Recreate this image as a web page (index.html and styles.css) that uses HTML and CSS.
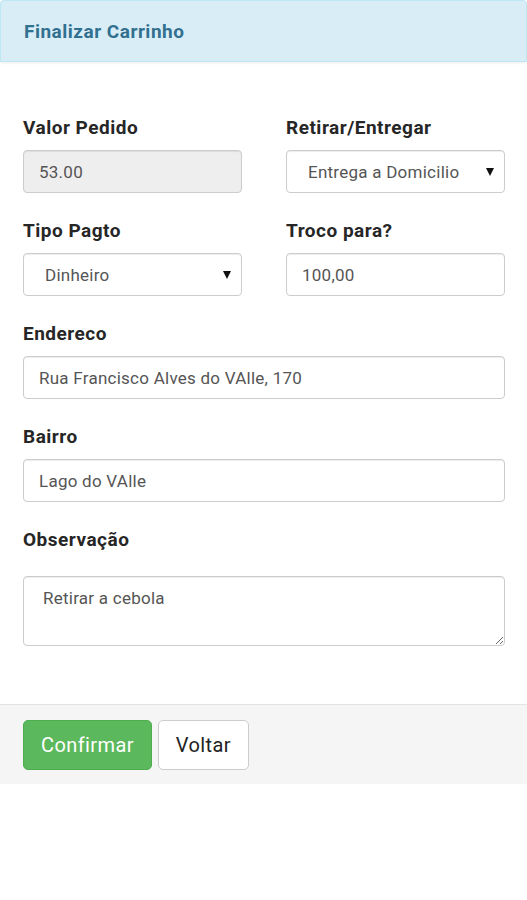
FILE: index.html
```html
<!DOCTYPE html>
<html lang="pt-BR">
<head>
  <meta charset="UTF-8">
  <title>Finalizar Carrinho</title>
  <link rel="stylesheet" href="styles.css">
</head>
<body>

  <div class="panel">
    <div class="panel-heading">
      <h3 class="panel-title">Finalizar Carrinho</h3>
    </div>

    <form class="panel-body">
      <div class="row">
        <div class="form-group">
          <label for="valor">Valor Pedido</label>
          <input id="valor" class="form-control" type="text" value="53.00" disabled>
        </div>
        <div class="form-group">
          <label for="entrega">Retirar/Entregar</label>
          <div class="select-wrap">
            <select id="entrega" class="form-control">
              <option>Entrega a Domicilio</option>
              <option>Retirar no Local</option>
            </select>
          </div>
        </div>
      </div>

      <div class="row">
        <div class="form-group">
          <label for="pagto">Tipo Pagto</label>
          <div class="select-wrap">
            <select id="pagto" class="form-control">
              <option>Dinheiro</option>
              <option>Cartao</option>
            </select>
          </div>
        </div>
        <div class="form-group">
          <label for="troco">Troco para?</label>
          <input id="troco" class="form-control" type="text" value="100,00">
        </div>
      </div>

      <div class="form-group">
        <label for="endereco">Endereco</label>
        <input id="endereco" class="form-control" type="text" value="Rua Francisco Alves do VAlle, 170">
      </div>

      <div class="form-group">
        <label for="bairro">Bairro</label>
        <input id="bairro" class="form-control" type="text" value="Lago do VAlle">
      </div>

      <div class="form-group">
        <label for="obs">Observação</label>
        <textarea id="obs" class="form-control obs">Retirar a cebola</textarea>
      </div>
    </form>

    <div class="panel-footer">
      <button class="btn btn-success" type="button">Confirmar</button>
      <button class="btn btn-default" type="button">Voltar</button>
    </div>
  </div>

</body>
</html>
```

FILE: styles.css
```css
body {
  margin: 0;
  background: #fff;
  font-family: Roboto, "Noto Sans", sans-serif;
  color: #262626;
}

.panel-heading {
  height: 60px;
  background: #d9edf7;
  border: 1px solid #bce8f1;
  border-radius: 4px 4px 0 0;
  box-shadow: 0 1px 3px rgba(0, 0, 0, 0.08);
  display: flex;
  align-items: center;
  padding: 0 23px;
}

.panel-title {
  margin: 0;
  font-size: 19px;
  font-weight: 700;
  letter-spacing: 0.5px;
  color: #31708f;
}

.panel-body {
  padding: 54px 22px 32px 23px;
}

.row {
  display: grid;
  grid-template-columns: 1fr 1fr;
  gap: 44px;
}

.form-group {
  margin-bottom: 26px;
}

label {
  display: block;
  font-size: 19px;
  font-weight: 700;
  letter-spacing: 0.5px;
  line-height: 24px;
  margin-bottom: 10px;
}

.form-control {
  display: block;
  box-sizing: border-box;
  width: 100%;
  height: 43px;
  padding: 0 15px;
  font-family: inherit;
  font-size: 17px;
  letter-spacing: 0.25px;
  color: #555;
  background: #fff;
  border: 1px solid #ccc;
  border-radius: 4px;
  box-shadow: inset 0 1px 1px rgba(0, 0, 0, 0.075);
}

.form-control:disabled {
  background: #eee;
  opacity: 1;
}

.select-wrap {
  position: relative;
}

.select-wrap select {
  appearance: none;
  -webkit-appearance: none;
  padding-left: 21px;
}

.select-wrap::after {
  content: "";
  position: absolute;
  right: 11px;
  top: 18px;
  border-left: 4px solid transparent;
  border-right: 4px solid transparent;
  border-top: 8px solid #111;
  pointer-events: none;
}

.obs {
  height: 70px;
  margin-top: 24px;
  padding: 10px 19px;
  line-height: 1.4;
  resize: vertical;
}

.panel-footer {
  background: #f5f5f5;
  border-top: 1px solid #e3e3e3;
  padding: 15px 23px 14px;
  display: flex;
  gap: 6px;
}

.btn {
  height: 50px;
  padding: 0 17px;
  font-family: inherit;
  font-size: 20px;
  letter-spacing: 0.4px;
  border-radius: 5px;
  cursor: pointer;
}

.btn-success {
  background: #5cb85c;
  border: 1px solid #4cae4c;
  color: #fff;
}

.btn-default {
  background: #fff;
  border: 1px solid #ccc;
  color: #222;
}
```
